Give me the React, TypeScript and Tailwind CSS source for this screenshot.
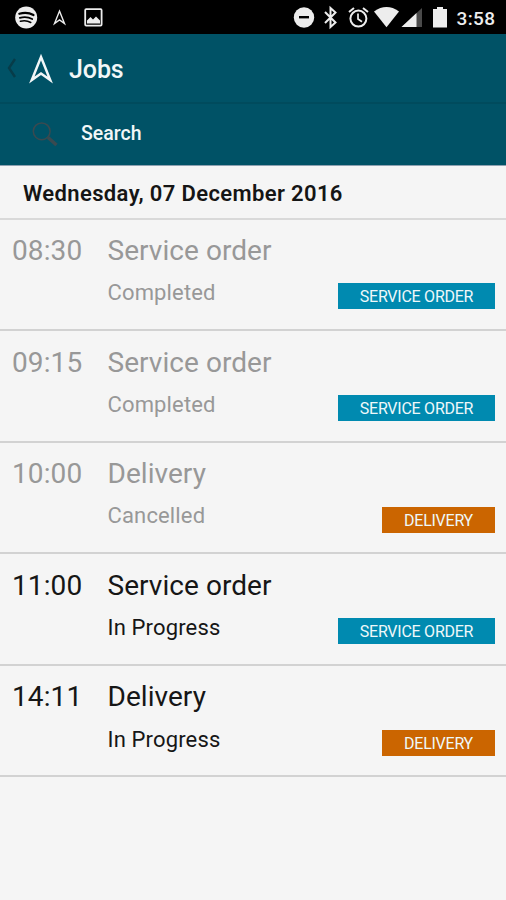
type Job = {
  time: string;
  title: string;
  status: string;
  active?: boolean;
};

const jobs: Job[] = [
  { time: '08:30', title: 'Service order', status: 'Completed' },
  { time: '09:15', title: 'Service order', status: 'Completed' },
  { time: '10:00', title: 'Delivery', status: 'Cancelled' },
  { time: '11:00', title: 'Service order', status: 'In Progress', active: true },
  { time: '14:11', title: 'Delivery', status: 'In Progress', active: true },
];

function Arrow({ className, stroke }: { className: string; stroke: number }) {
  return (
    <svg className={className} viewBox="0 0 24 32" fill="none" stroke="currentColor" strokeWidth={stroke}>
      <path d="M12 5 L21.2 28 L12 21.5 L2.8 28 Z" strokeLinejoin="miter" strokeMiterlimit={6} />
    </svg>
  );
}

function StatusBar() {
  return (
    <div className="flex h-[34px] items-center bg-black text-[#ededed]">
      <svg className="ml-[15px] h-[23px] w-[23px]" viewBox="0 0 23 23">
        <circle cx="11.2" cy="11.5" r="11" fill="currentColor" />
        <g fill="none" stroke="#000" strokeLinecap="round">
          <path d="M4.3 7.8 C9 6.4 14.5 6.8 18.5 9" strokeWidth="2.2" />
          <path d="M4.8 11.8 C9 10.6 13.6 11 17.2 13" strokeWidth="1.8" />
          <path d="M5.4 15.3 C9 14.4 12.6 14.7 15.8 16.5" strokeWidth="1.5" />
        </g>
      </svg>
      <Arrow className="ml-[15px] h-[18px] w-[13px]" stroke={2.6} />
      <svg className="ml-[18px] h-[19px] w-[19px]" viewBox="0 0 19 19">
        <rect x="1.2" y="1.2" width="16.4" height="16.4" rx="1" fill="none" stroke="currentColor" strokeWidth="1.8" />
        <path d="M3 15.5 V12.5 L6.5 9 L9 11.5 L12 8.5 L16 12.5 V15.5 Z" fill="currentColor" />
      </svg>

      <svg className="ml-auto h-[34px] w-[226px]" viewBox="280 0 226 34">
        <circle cx="304" cy="17.5" r="10.2" fill="currentColor" />
        <path d="M299 17.2 H309" stroke="#000" strokeWidth="2.4" />
        <path d="M325 12 L335.5 22.5 L330.5 27 V8 L335.5 12.5 L325 23" fill="none" stroke="currentColor" strokeWidth="2" />
        <g fill="none" stroke="currentColor">
          <circle cx="358.4" cy="18.6" r="8" strokeWidth="2" />
          <path d="M358 13.5 V19 L362 21.8" strokeWidth="1.7" />
          <path d="M349 12 L354 8 M363 8 L368 12" strokeWidth="2" />
        </g>
        <path d="M374 11.4 Q386.5 2.8 399 11.4 L386.5 27.2 Z" fill="currentColor" />
        <path d="M422 8 V27 H401.5 Z" fill="#4a4a4a" />
        <path d="M416.5 13.1 V27 H401.5 Z" fill="currentColor" />
        <path d="M433 9 H437 V7 H443 V9 H447 V27.5 H433 Z" fill="currentColor" />
        <text x="456.5" y="24.6" fill="currentColor" fontSize="19" fontWeight="500" textLength="38.5" className="font-[Roboto,sans-serif]">
          3:58
        </text>
      </svg>
    </div>
  );
}

function JobRow({ job }: { job: Job }) {
  const delivery = job.title === 'Delivery';
  return (
    <li
      className={`flex h-[111.6px] border-b-2 border-[#d2d2d2] pl-3 pr-[11px] ${
        job.active ? 'text-[#161616]' : 'text-[#989898]'
      }`}
    >
      <time className="mt-[14.5px] w-[95.5px] text-[28px] leading-[34px] tracking-[0.1px]">{job.time}</time>
      <div className="flex-1">
        <h2 className="mt-[14.5px] text-[28px] leading-[34px] tracking-[0.05px]">{job.title}</h2>
        <p className="mt-[11.3px] text-[22px] leading-[28px] tracking-[0.15px]">{job.status}</p>
      </div>
      <span
        className={`mt-[63.9px] flex h-[26px] items-center justify-center pt-[2px] text-[16px] tracking-[-0.25px] text-[#eef8fa] ${
          delivery ? 'w-[113px] bg-[#cb6500]' : 'w-[157px] bg-[#008ab0]'
        }`}
      >
        {job.title.toUpperCase()}
      </span>
    </li>
  );
}

export default function App() {
  return (
    <div className="flex h-[900px] w-[506px] flex-col overflow-hidden bg-[#f5f5f5] font-[Roboto,sans-serif]">
      <StatusBar />
      <header className="h-[132px] border-b border-[#8da1b1] bg-[#005266] text-[#f2f7f8]">
        <div className="flex h-[68px] items-center">
          <svg className="ml-[6px] h-[22px] w-[11px] text-[#073c49]" viewBox="0 0 11 22" fill="none" stroke="currentColor" strokeWidth="2.4">
            <path d="M9 2 L3 11 L9 20" />
          </svg>
          <Arrow className="ml-[12px] h-[32px] w-[24px]" stroke={2.5} />
          <h1 className="ml-[16px] pt-[3px] text-[25px] font-medium tracking-[-0.1px]">Jobs</h1>
        </div>
        <div className="flex h-[62px] items-center border-t-2 border-[#004b5d]">
          <svg className="ml-[32px] h-[25px] w-[26px]" viewBox="0 0 26 25" fill="none" stroke="#3a4a50">
            <circle cx="9.7" cy="9.3" r="8.4" strokeWidth="1.5" />
            <path d="M16 15.5 L24.5 23" strokeWidth="3.4" />
          </svg>
          <span className="ml-[23px] text-[19.5px] font-medium">Search</span>
        </div>
      </header>
      <div className="flex h-[53.5px] items-center border-b-2 border-[#d9d9d9] pl-[23px] pt-[3px] text-[22px] font-semibold tracking-[0.37px] text-[#151515]">
        Wednesday, 07 December 2016
      </div>
      <ul>
        {jobs.map((job) => (
          <JobRow key={job.time} job={job} />
        ))}
      </ul>
    </div>
  );
}
